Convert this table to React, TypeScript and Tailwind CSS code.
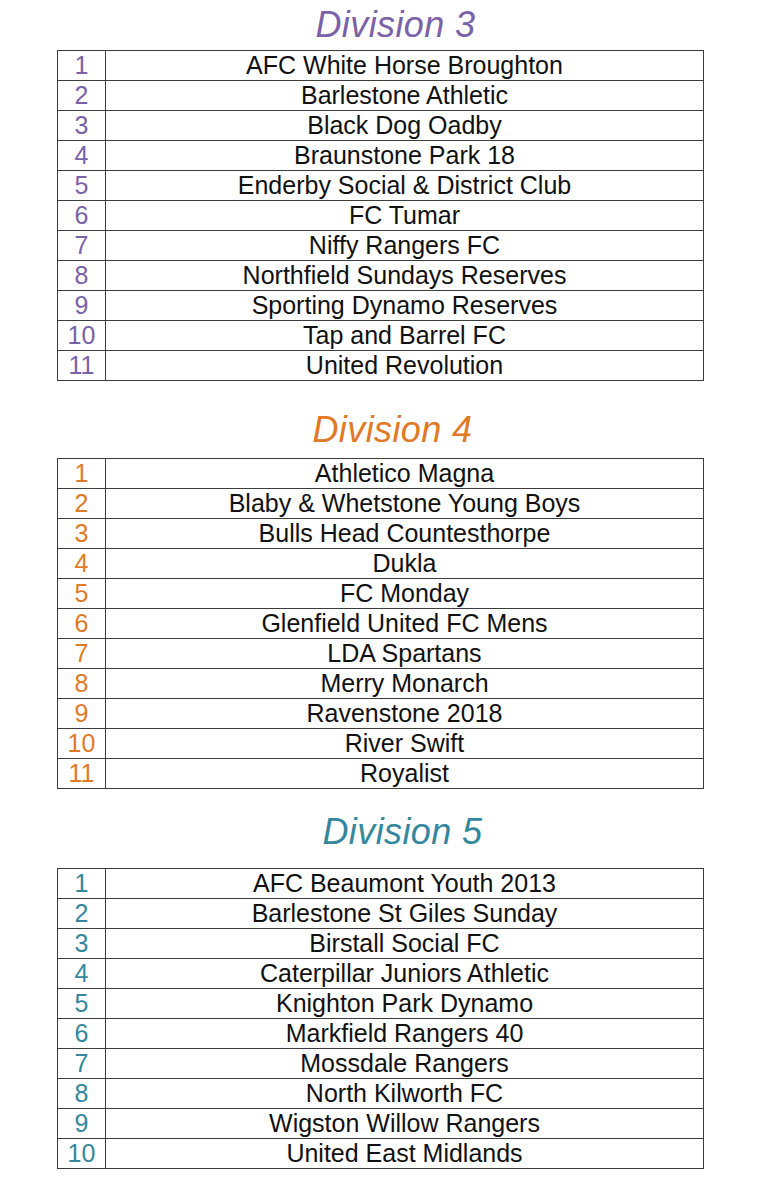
import React from "react";

type Section = {
  title: string;
  color: string;
  teams: string[];
};

const sections: Section[] = [
  {
    title: "Division 3",
    color: "text-[#7a62a8]",
    teams: [
      "AFC White Horse Broughton",
      "Barlestone Athletic",
      "Black Dog Oadby",
      "Braunstone Park 18",
      "Enderby Social & District Club",
      "FC Tumar",
      "Niffy Rangers FC",
      "Northfield Sundays Reserves",
      "Sporting Dynamo Reserves",
      "Tap and Barrel FC",
      "United Revolution",
    ],
  },
  {
    title: "Division 4",
    color: "text-[#e07a26]",
    teams: [
      "Athletico Magna",
      "Blaby & Whetstone Young Boys",
      "Bulls Head Countesthorpe",
      "Dukla",
      "FC Monday",
      "Glenfield United FC Mens",
      "LDA Spartans",
      "Merry Monarch",
      "Ravenstone 2018",
      "River Swift",
      "Royalist",
    ],
  },
  {
    title: "Division 5",
    color: "text-[#34879c]",
    teams: [
      "AFC Beaumont Youth 2013",
      "Barlestone St Giles Sunday",
      "Birstall Social FC",
      "Caterpillar Juniors Athletic",
      "Knighton Park Dynamo",
      "Markfield Rangers 40",
      "Mossdale Rangers",
      "North Kilworth FC",
      "Wigston Willow Rangers",
      "United East Midlands",
    ],
  },
];

const sectionSpacing = [
  { wrap: "pt-[5px]", title: "pl-[30px] mb-[5px]" },
  { wrap: "pt-[29px]", title: "pl-[24px] mb-[8px]" },
  { wrap: "pt-[23px]", title: "pl-[44px] mb-[16px]" },
];

function Table({ s }: { s: Section }) {
  return (
    <div className="ml-[57px] w-[647px] border border-[#3c3c3c]">
      {s.teams.map((t, i) => (
        <div
          key={t}
          className={`flex ${i > 0 ? "h-[30px] border-t border-[#3c3c3c]" : "h-[29px]"}`}
        >
          <div
            className={`w-[48px] shrink-0 border-r border-[#3c3c3c] text-center text-[25px] leading-[29px] ${s.color}`}
          >
            {i + 1}
          </div>
          <div className="flex-1 text-center text-[25px] leading-[29px] text-[#111] whitespace-nowrap">
            {t}
          </div>
        </div>
      ))}
    </div>
  );
}

export default function App() {
  return (
    <div
      className="w-[764px] min-h-[1200px] bg-white"
      style={{ fontFamily: '"Liberation Sans", Arial, sans-serif' }}
    >
      {sections.map((s, idx) => (
        <div key={s.title} className={sectionSpacing[idx].wrap}>
          <div
            className={`ml-[57px] w-[647px] text-center ${sectionSpacing[idx].title}`}
          >
            <h2
              className={`italic text-[36px] leading-[40px] tracking-[0.4px] ${s.color}`}
            >
              {s.title}
            </h2>
          </div>
          <Table s={s} />
        </div>
      ))}
    </div>
  );
}
